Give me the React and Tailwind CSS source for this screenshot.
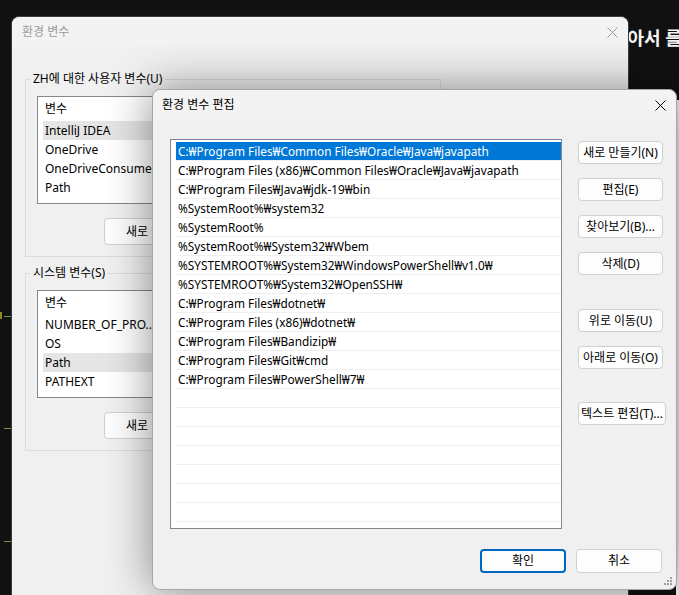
import React from 'react';

const pathItems = [
  'C:₩Program Files₩Common Files₩Oracle₩Java₩javapath',
  'C:₩Program Files (x86)₩Common Files₩Oracle₩Java₩javapath',
  'C:₩Program Files₩Java₩jdk-19₩bin',
  '%SystemRoot%₩system32',
  '%SystemRoot%',
  '%SystemRoot%₩System32₩Wbem',
  '%SYSTEMROOT%₩System32₩WindowsPowerShell₩v1.0₩',
  '%SYSTEMROOT%₩System32₩OpenSSH₩',
  'C:₩Program Files₩dotnet₩',
  'C:₩Program Files (x86)₩dotnet₩',
  'C:₩Program Files₩Bandizip₩',
  'C:₩Program Files₩Git₩cmd',
  'C:₩Program Files₩PowerShell₩7₩',
];

const userVars = ['IntelliJ IDEA', 'OneDrive', 'OneDriveConsumer', 'Path'];
const systemVars = ['NUMBER_OF_PRO...', 'OS', 'Path', 'PATHEXT'];

const CloseIcon = ({ className }) => (
  <svg width="11" height="11" viewBox="0 0 11 11" className={className}>
    <path d="M0.5 0.5 L10.5 10.5 M10.5 0.5 L0.5 10.5" stroke="currentColor" strokeWidth="1" fill="none" />
  </svg>
);

const WinButton = ({ children, className = '' }) => (
  <button
    className={`h-[23px] rounded-[4px] border border-[#d0d0d0] bg-[#fdfdfd] text-[12px] leading-none text-black whitespace-nowrap flex items-center justify-center ${className}`}
  >
    {children}
  </button>
);

const VarGroup = ({ label, items, selected }) => (
  <fieldset className="ml-[13px] w-[416px] border border-[#dcdcdc] px-[11px] pb-[11px]">
    <legend className="ml-[-7px] px-[3px] text-[12px] leading-[16px] text-black">{label}</legend>
    <div className="mt-[9px] h-[108px] w-[390px] border border-[#828790] bg-white pl-[5px]">
      <div className="h-[24px] pl-[2px] pt-[2px] text-[12px] leading-[20px] text-black">변수</div>
      {items.map((item) => (
        <div
          key={item}
          className={`h-[19px] pl-[2px] text-[12px] leading-[19px] text-black ${item === selected ? 'bg-[#e5e5e5]' : ''}`}
        >
          {item}
        </div>
      ))}
    </div>
    <div className="mt-[14px] flex">
      <div className="ml-[67px] h-[27px] w-[90px] rounded-[4px] border border-[#d0d0d0] bg-[#fdfdfd] pl-[21px] text-[12px] leading-[25px] text-black whitespace-nowrap overflow-hidden">
        새로 만들기(W)...
      </div>
    </div>
  </fieldset>
);

export default function App() {
  const rows = Array.from({ length: 20 }, (_, i) => pathItems[i] || '');

  return (
    <div className="relative h-[595px] w-[679px] overflow-hidden bg-[#111111] font-['Noto_Sans','Noto_Sans_CJK_KR',sans-serif]">
      {/* desktop bits behind the windows */}
      <div className="absolute left-[4px] top-[316px] h-[1px] w-[7px] bg-[#6a9955]" />
      <div className="absolute left-[0px] top-[312px] h-[7px] w-[2px] bg-[#8a8a20]" />
      <div className="absolute left-[4px] top-[428px] h-[1px] w-[7px] bg-[#6a9955]" />
      <div className="absolute left-[4px] top-[541px] h-[1px] w-[7px] bg-[#6a9955]" />
      <div className="absolute left-[611px] top-[25px] text-[18px] font-bold leading-[26px] text-[#f5f5f5] whitespace-nowrap">
        찾아서 를
      </div>
      <div className="absolute left-[676px] top-[100px] h-[495px] w-[3px] bg-[#f3f3f3]" />

      {/* back window: 환경 변수 */}
      <div className="absolute left-[11px] top-[16px] h-[600px] w-[618px] rounded-t-[8px] border border-[#3c3c3c] bg-[#f0f0f0]">
        <div className="flex h-[30px] items-center justify-between rounded-t-[8px] bg-[#f3f3f3] pl-[10px] pr-[10px]">
          <span className="text-[12px] text-[#9b9b9b]">환경 변수</span>
          <CloseIcon className="text-[#9b9b9b]" />
        </div>
        <div className="pt-[24px]">
          <VarGroup label="ZH에 대한 사용자 변수(U)" items={userVars} selected="IntelliJ IDEA" />
          <div className="h-[8px]" />
          <VarGroup label="시스템 변수(S)" items={systemVars} selected="Path" />
        </div>
      </div>

      {/* front dialog: 환경 변수 편집 */}
      <div className="absolute left-[152px] top-[89px] h-[501px] w-[525px] rounded-[8px] border border-[#a6a6a6] bg-[#f0f0f0] shadow-[0_0_45px_rgba(0,0,0,0.45)]">
        <div className="flex h-[30px] items-center justify-between rounded-t-[8px] bg-[#f3f3f3] pl-[9px] pr-[10px]">
          <span className="text-[12px] text-black">환경 변수 편집</span>
          <CloseIcon className="text-black" />
        </div>
        <div className="flex pl-[17px] pt-[19px]">
          <div className="h-[390px] w-[392px] border border-[#828790] bg-white pl-[5px] pt-[2px]">
            {rows.map((item, i) => (
              <div
                key={i}
                className={`h-[19px] border-b border-[#f0f0f0] pl-[2px] text-[11.8px] leading-[18px] whitespace-nowrap ${
                  i === 0 ? 'bg-[#0078d7] text-white' : 'text-black'
                }`}
              >
                {item}
              </div>
            ))}
          </div>
          <div className="ml-[16px] flex flex-col pt-[2px]">
            <WinButton className="w-[85px]">새로 만들기(N)</WinButton>
            <WinButton className="mt-[14px] w-[85px]">편집(E)</WinButton>
            <WinButton className="mt-[14px] w-[85px]">찾아보기(B)...</WinButton>
            <WinButton className="mt-[14px] w-[85px]">삭제(D)</WinButton>
            <WinButton className="mt-[34px] w-[85px]">위로 이동(U)</WinButton>
            <WinButton className="mt-[14px] w-[85px]">아래로 이동(O)</WinButton>
            <WinButton className="mt-[33px] w-[88px]">텍스트 편집(T)...</WinButton>
          </div>
        </div>
        <div className="mt-[20px] flex justify-end gap-[10px] pr-[14px]">
          <button className="h-[24px] w-[86px] rounded-[4px] border-2 border-[#0067c0] bg-[#fdfdfd] text-[12px] text-black">
            확인
          </button>
          <WinButton className="h-[24px] w-[86px]">취소</WinButton>
        </div>
        <svg width="10" height="10" viewBox="0 0 10 10" className="absolute bottom-[3px] right-[3px]">
          <rect x="7" y="1" width="2" height="2" fill="#a0a0a0" />
          <rect x="4" y="4" width="2" height="2" fill="#a0a0a0" />
          <rect x="7" y="4" width="2" height="2" fill="#a0a0a0" />
          <rect x="1" y="7" width="2" height="2" fill="#a0a0a0" />
          <rect x="4" y="7" width="2" height="2" fill="#a0a0a0" />
          <rect x="7" y="7" width="2" height="2" fill="#a0a0a0" />
        </svg>
      </div>
    </div>
  );
}
